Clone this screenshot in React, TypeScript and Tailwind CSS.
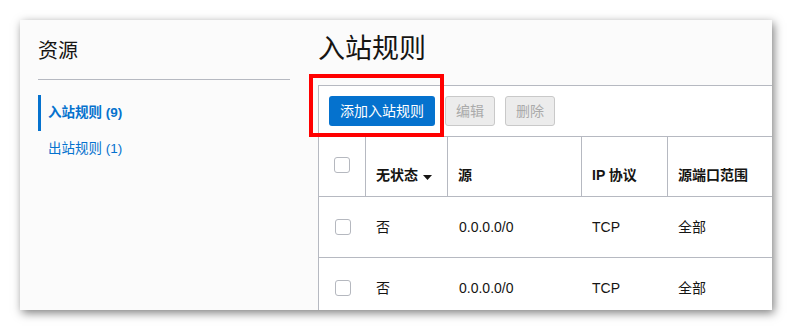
import React from "react";

const font = { fontFamily: '"Liberation Sans", "Noto Sans CJK SC", sans-serif' };

function Checkbox() {
  return <div className="w-[16px] h-[16px] rounded-[3px] border border-[#b5b8bf] bg-white" />;
}

export default function App() {
  const rows = [
    { s: "否", src: "0.0.0.0/0", p: "TCP", r: "全部" },
    { s: "否", src: "0.0.0.0/0", p: "TCP", r: "全部" },
  ];
  return (
    <div className="w-[792px] h-[330px] bg-white pt-[20px] pl-[20px]" style={font}>
      <div className="relative w-[752px] h-[290px] bg-[#fbfbfb] overflow-hidden shadow-[2px_3px_9px_rgba(0,0,0,0.5)] flex">
        {/* Sidebar */}
        <div className="w-[270px] shrink-0 pl-[18px] pt-[17px]">
          <div className="text-[20px] leading-[28px] text-[#161513] mb-[14px]">资源</div>
          <div className="h-px bg-[#b6b9c1]" />
          <div className="mt-[15px]">
            <div className="h-[36px] flex items-center border-l-[3px] border-[#0572ce] pl-[7px] text-[13.5px] font-bold text-[#0572ce]">
              入站规则 (9)
            </div>
            <div className="h-[36px] flex items-center pl-[10px] text-[13.5px] text-[#0572ce]">出站规则 (1)</div>
          </div>
        </div>
        {/* Main */}
        <div className="pl-[28px] pt-[11px] shrink-0">
          <div className="text-[27px] leading-[36px] text-[#161513] mb-[18px]">入站规则</div>
          <div className="w-[500px] border-t border-l border-[#b6b9c1] bg-white">
            <div className="flex gap-[10px] pl-[10px] pt-[10px] pb-[10px]">
              <div className="w-[106px] h-[30px] rounded-[3px] bg-[#0572ce] text-white text-[14px] flex items-center justify-center">
                添加入站规则
              </div>
              <div className="w-[50px] h-[30px] rounded-[3px] bg-[#ececec] border border-[#c9c9c9] text-[#aaaaaa] text-[14px] flex items-center justify-center">
                编辑
              </div>
              <div className="w-[50px] h-[30px] rounded-[3px] bg-[#ececec] border border-[#c9c9c9] text-[#aaaaaa] text-[14px] flex items-center justify-center">
                删除
              </div>
            </div>
            {/* header */}
            <div className="flex h-[61px] border-t border-b border-[#b6b9c1] text-[14px] font-bold text-[#161513]">
              <div className="w-[47px] border-r border-[#b6b9c1] flex justify-center pt-[20px]">
                <Checkbox />
              </div>
              <div className="w-[82px] border-r border-[#b6b9c1] flex items-end pb-[10px] pl-[10px] gap-[5px]">
                <span>无状态</span>
                <svg width="9" height="5" viewBox="0 0 9 5" className="mb-[6px]">
                  <path d="M0 0 L9 0 L4.5 5 Z" fill="#161513" />
                </svg>
              </div>
              <div className="w-[134px] border-r border-[#b6b9c1] flex items-end pb-[10px] pl-[10px]">源</div>
              <div className="w-[86px] border-r border-[#b6b9c1] flex items-end pb-[10px] pl-[10px]">IP 协议</div>
              <div className="flex-1 flex items-end pb-[10px] pl-[10px]">源端口范围</div>
            </div>
            {rows.map((r, i) => (
              <div key={i} className="flex h-[61px] border-b border-[#b6b9c1] text-[14px] text-[#161513]">
                <div className="w-[47px] flex items-center justify-center">
                  <Checkbox />
                </div>
                <div className="w-[82px] flex items-center pl-[10px]">{r.s}</div>
                <div className="w-[134px] flex items-center pl-[11px]">{r.src}</div>
                <div className="w-[86px] flex items-center pl-[10px]">{r.p}</div>
                <div className="flex-1 flex items-center pl-[10px]">{r.r}</div>
              </div>
            ))}
          </div>
        </div>
        {/* red highlight */}
        <div className="absolute left-[289px] top-[54px] w-[135px] h-[63px] border-[4px] border-[#ff0000]" />
      </div>
    </div>
  );
}
